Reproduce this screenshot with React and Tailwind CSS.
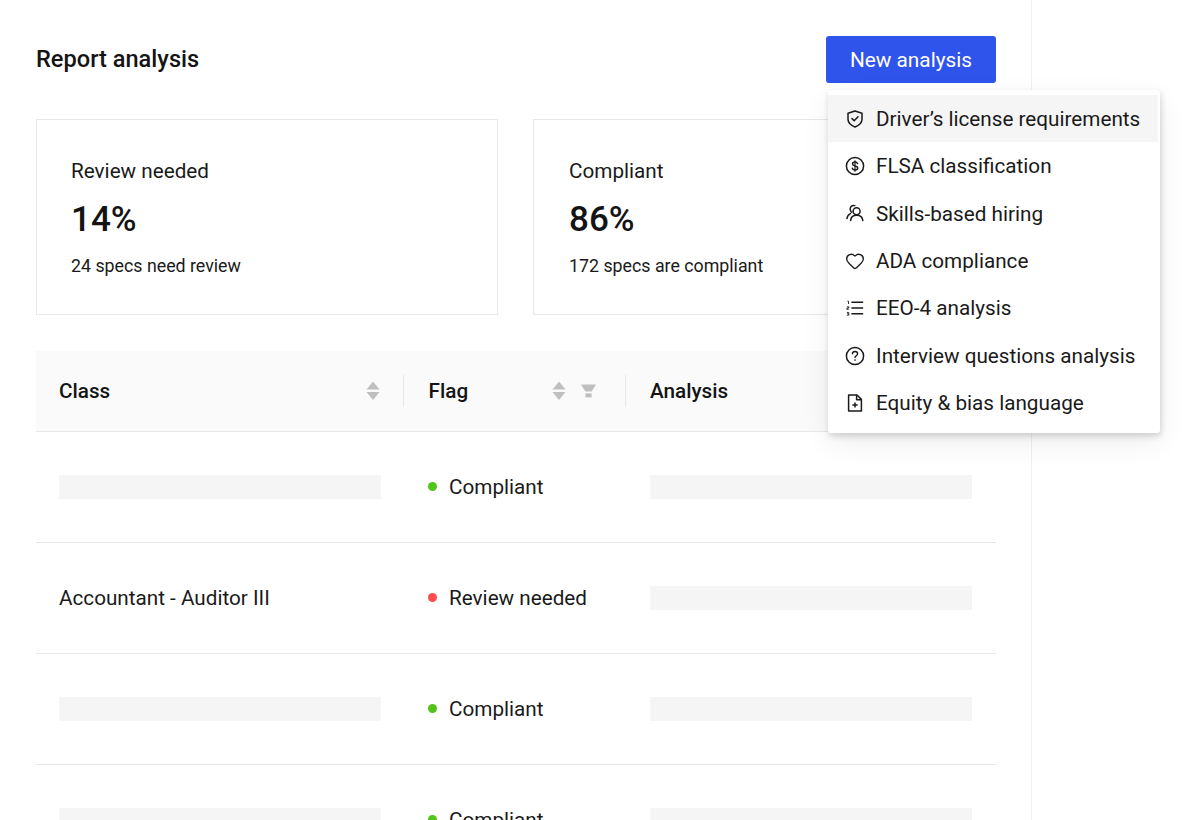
import React from "react";
import { Heart } from "lucide-react";

function Shield() {
  return (
    <svg width="18" height="18" viewBox="0 0 18 18" fill="none" stroke="currentColor" strokeWidth="1.5" strokeLinejoin="round" strokeLinecap="round">
      <path d="M9 1 L16 3.3 V9.2 C16 12.6 13 15.4 9 17 C5 15.4 2 12.6 2 9.2 V3.3 Z" />
      <path d="M6 8.6 L8.2 10.8 L12 6.8" />
    </svg>
  );
}

function Dollar() {
  return (
    <svg width="20" height="20" viewBox="0 0 20 20" fill="none" stroke="currentColor" strokeWidth="1.5" strokeLinecap="round">
      <circle cx="10" cy="10" r="8.6" />
      <path d="M12.5 7.6 C12.2 6.6 11.2 6.1 10 6.1 C8.5 6.1 7.5 6.9 7.5 8 C7.5 10.6 12.7 9.2 12.7 11.9 C12.7 13.1 11.5 13.9 10 13.9 C8.7 13.9 7.7 13.3 7.3 12.2" strokeWidth="1.5" />
      <path d="M10 4.8 V15.2" strokeWidth="1.2" />
    </svg>
  );
}

function People() {
  return (
    <svg width="18" height="18" viewBox="0 0 18 18" fill="none" stroke="currentColor" strokeWidth="1.5" strokeLinecap="round" strokeLinejoin="round">
      <circle cx="10.6" cy="7.2" r="3.5" />
      <path d="M4.6 16.6 C4.8 13.2 7.2 11.2 10.6 11.2 C14 11.2 16.6 13.2 16.8 16.6" />
      <path d="M8.8 1.6 C6.2 0.8 4.2 2.6 4.2 5 C4.2 6.4 4.7 7.6 5.5 8.3" />
      <path d="M4.4 9.6 C2.4 10.6 1.2 12.4 1 14.6" />
    </svg>
  );
}

function ListIcon() {
  return (
    <svg width="18" height="18" viewBox="0 0 18 18" fill="none" stroke="currentColor" strokeWidth="1.5">
      <path d="M5.4 3.2 H17.2 M5.4 9 H17.2 M5.4 14.8 H17.2" />
      <path d="M1.4 2.2 H2.5 V5 M0.9 7.8 H2.8 V9 H0.9 V10.3 H2.8 M0.9 13.6 H2.8 V14.8 H1.2 M2.8 14.8 V16.2 H0.9" strokeWidth="0.9" />
    </svg>
  );
}

function Help() {
  return (
    <svg width="20" height="20" viewBox="0 0 20 20" fill="none" stroke="currentColor" strokeWidth="1.5" strokeLinecap="round">
      <circle cx="10" cy="10" r="8.6" />
      <path d="M7.4 7.8 C7.4 6.3 8.5 5.5 10 5.5 C11.5 5.5 12.6 6.4 12.6 7.8 C12.6 9.7 10 9.7 10 11.5" strokeWidth="1.4" />
      <circle cx="10" cy="14" r="0.85" fill="currentColor" stroke="none" />
    </svg>
  );
}

function FilePlusIcon() {
  return (
    <svg width="18" height="18" viewBox="0 0 18 18" fill="none" stroke="currentColor" strokeWidth="1.5" strokeLinejoin="round">
      <path d="M2.6 1 H11 L15.4 5.4 V17 H2.6 Z" />
      <path d="M10.6 1.2 V5.8 H15.4" />
      <path d="M9 8.4 V13.6 M6.4 11 H11.6" />
    </svg>
  );
}

function Sort() {
  return (
    <svg width="14" height="20" viewBox="0 0 14 20" fill="#bfbfbf" className="block">
      <path d="M7 0.5 L13.5 8.5 H0.5 Z" />
      <path d="M0.5 11 H13.5 L7 19 Z" />
    </svg>
  );
}

function Funnel() {
  return (
    <svg width="15" height="14" viewBox="0 0 15 14" fill="#bfbfbf" className="block">
      <path d="M0 0.5 H15 L10.6 7.5 H4.4 Z" />
      <path d="M4.4 9.4 H10.6 V13.4 H4.4 Z" />
    </svg>
  );
}

const menu = [
  { label: "Driver’s license requirements", icon: <Shield />, active: true },
  { label: "FLSA classification", icon: <Dollar /> },
  { label: "Skills-based hiring", icon: <People /> },
  { label: "ADA compliance", icon: <Heart size={20} strokeWidth={1.6} /> },
  { label: "EEO-4 analysis", icon: <ListIcon /> },
  { label: "Interview questions analysis", icon: <Help /> },
  { label: "Equity & bias language", icon: <FilePlusIcon /> },
];

const rows = [
  { name: null, flag: "Compliant", color: "bg-[#52c41a]" },
  { name: "Accountant - Auditor III", flag: "Review needed", color: "bg-[#ff4d4f]" },
  { name: null, flag: "Compliant", color: "bg-[#52c41a]" },
  { name: null, flag: "Compliant", color: "bg-[#52c41a]" },
];

function Card({ title, value, note, className }) {
  return (
    <div className={`h-[196px] border border-[#e8e8e8] pt-[36px] ${className}`}>
      <div className="text-[20.7px] leading-[30px] text-[#1a1a1a]">{title}</div>
      <div className="mt-[11px] text-[35px] leading-[46px] font-medium text-[#141414]">{value}</div>
      <div className="mt-[10px] text-[17.8px] leading-[26px] text-[#1a1a1a]">{note}</div>
    </div>
  );
}

export default function App() {
  return (
    <div className="relative h-[820px] w-[1200px] overflow-hidden bg-white font-['Roboto',sans-serif] text-[#141414]">
      <div className="h-[820px] w-[1032px] border-r border-[#f0f0f0] pl-[36px] pr-[35px] pt-[36px]">
        <div className="flex h-[47px] items-center justify-between">
          <h1 className="text-[23.6px] font-medium leading-[47px] text-[#141414]">Report analysis</h1>
          <button className="h-[47px] w-[170px] rounded-[3px] bg-[#2f54eb] pt-[2px] text-[20.8px] text-white">New analysis</button>
        </div>

        <div className="mt-[36px] flex gap-[35px]">
          <Card className="w-[462px] pl-[34px]" title="Review needed" value="14%" note="24 specs need review" />
          <Card className="flex-1 pl-[35px]" title="Compliant" value="86%" note="172 specs are compliant" />
        </div>

        <div className="mt-[36px]">
          <div className="grid h-[81px] grid-cols-[368px_222px_370px] items-center border-b border-[#e8e8e8] bg-[#fafafa] text-[20.7px] font-medium">
            <div className="flex h-[32px] items-center justify-between border-r border-[#e8e8e8] pl-[23px] pr-[23px]">
              <span className="pt-[2px]">Class</span>
              <Sort />
            </div>
            <div className="flex h-[32px] items-center border-r border-[#e8e8e8] pl-[24.6px] pr-[29.5px]">
              <span className="flex-1 pt-[2px]">Flag</span>
              <Sort />
              <span className="ml-[15px]"><Funnel /></span>
            </div>
            <div className="pl-[24px] pt-[2px]">Analysis</div>
          </div>

          {rows.map((r, i) => (
            <div key={i} className="grid h-[111px] grid-cols-[368px_222px_370px] items-center border-b border-[#e8e8e8] text-[20.7px] text-[#1a1a1a]">
              <div className="pl-[23px] pr-[23px]">
                {r.name ? <div className="pt-[2px]">{r.name}</div> : <div className="h-[24px] w-[322px] bg-[#f5f5f5]" />}
              </div>
              <div className="flex items-center pl-[24px]">
                <span className={`mr-[12px] h-[9px] w-[9px] rounded-full ${r.color}`} />
                <span className="pt-[2px]">{r.flag}</span>
              </div>
              <div className="pl-[24px]">
                <div className="h-[24px] w-[322px] bg-[#f5f5f5]" />
              </div>
            </div>
          ))}
        </div>
      </div>

      <div className="absolute left-[828px] top-[90px] h-[343px] w-[332px] rounded-[3px] bg-white py-[5px] shadow-[1px_3px_6px_rgba(0,0,0,0.16),0_10px_28px_rgba(0,0,0,0.07)]">
        {menu.map((m) => (
          <div key={m.label} className={`flex h-[47.4px] items-center pl-[17px] text-[20.7px] text-[#1a1a1a] ${m.active ? "mr-[2px] bg-[#f5f5f5]" : ""}`}>
            <span className="flex w-[20px] items-center justify-center">{m.icon}</span>
            <span className="ml-[11px] whitespace-nowrap pt-[1.4px]">{m.label}</span>
          </div>
        ))}
      </div>
    </div>
  );
}
